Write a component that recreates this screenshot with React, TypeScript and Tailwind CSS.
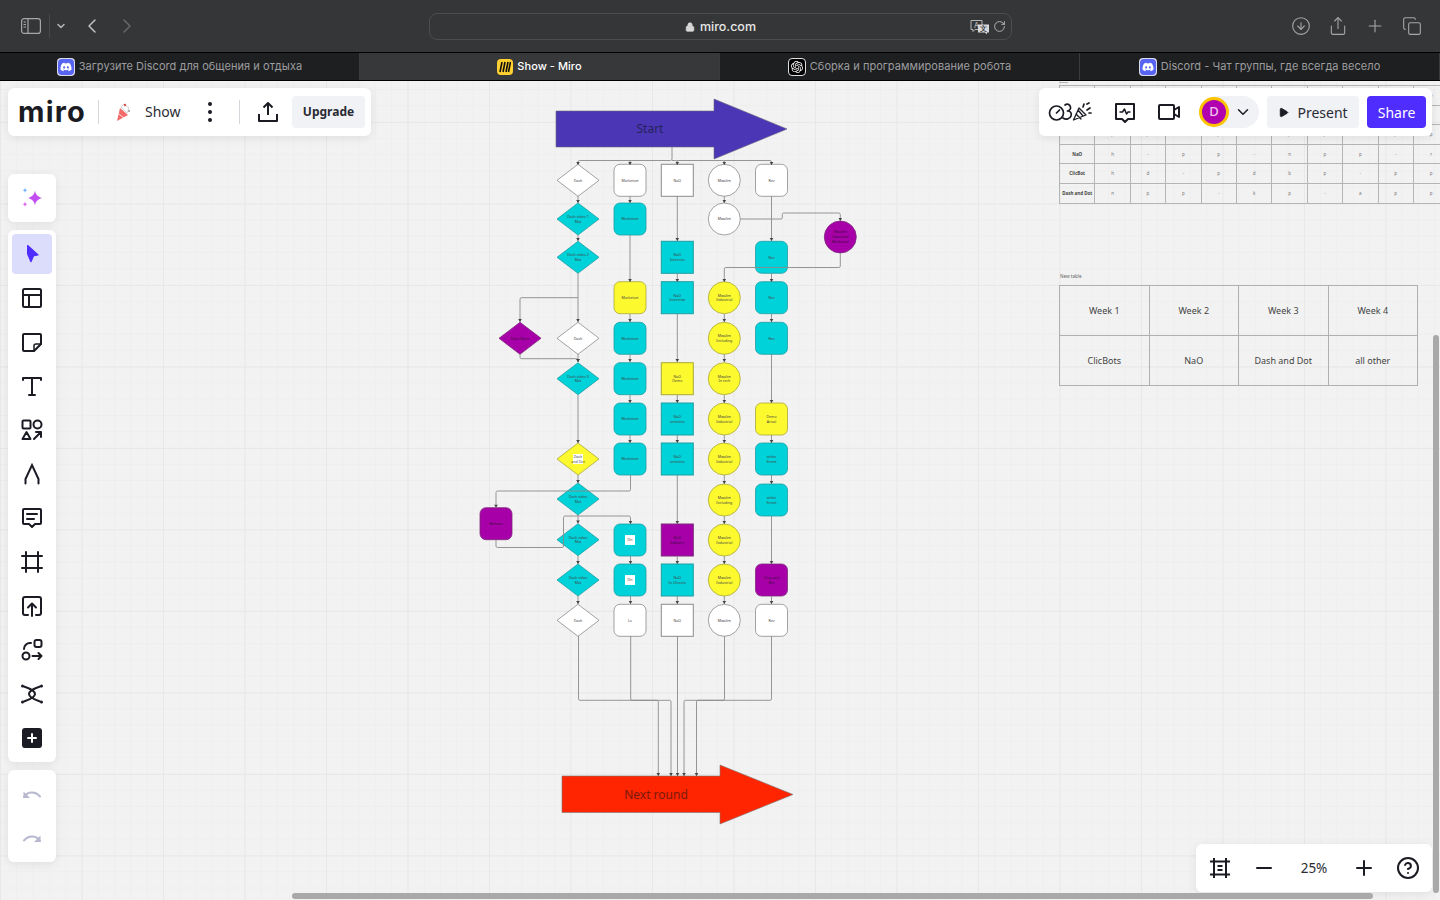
import React from 'react';
import { ChevronDown, ChevronLeft, ChevronRight, CircleArrowDown, CircleHelp, Copy, Lock, Minus, Play, Plus, RotateCw, Share } from 'lucide-react';
import { FaDiscord } from 'react-icons/fa';
import { SiOpenai } from 'react-icons/si';

const sans = 'font-["Noto_Sans",sans-serif]';

type Shape = 'diamond' | 'round' | 'square' | 'circle';
type Node = { s: Shape; x: number; y: number; fill: string; t: string[]; hl?: boolean };

const CY = '#00d2d9';
const YE = '#fdf92f';
const PU = '#a800a8';
const WH = '#ffffff';

const col = (s: Shape, x: number, rows: [number, string, string[], boolean?][]): Node[] =>
  rows.map(([y, fill, t, hl]) => ({ s, x, y, fill, t, hl }));

const nodes: Node[] = [
  ...col('diamond', 578, [
    [180.3, WH, ['Dash']],
    [219, CY, ['Dash video 1', 'Mat']],
    [257.3, CY, ['Dash video 2', 'Mat']],
    [338.3, WH, ['Dash']],
    [378.7, CY, ['Dash video 3', 'Mat']],
    [459, YE, ['Dash', 'and Dot'], true],
    [499, CY, ['Dash video', 'Mat']],
    [539.7, CY, ['Dash video', 'Mat']],
    [580, CY, ['Dash video', 'Mat']],
    [620.3, WH, ['Dash']],
  ]),
  ...col('diamond', 520, [[338.3, PU, ['Dash Nano']]]),
  ...col('round', 630, [
    [180.3, WH, ['Marketset']],
    [219, CY, ['Marketset']],
    [297.7, YE, ['Marketset']],
    [338.3, CY, ['Marketset']],
    [378.7, CY, ['Marketset']],
    [419, CY, ['Marketset']],
    [459, CY, ['Marketset']],
    [540, CY, ['Dn'], true],
    [580, CY, ['Dn'], true],
    [620.3, WH, ['Lo']],
  ]),
  ...col('round', 496, [[523.7, PU, ['Rennen']]]),
  ...col('square', 677.3, [
    [180.3, WH, ['NaO']],
    [257.3, CY, ['NaO', 'Intervies']],
    [297.7, CY, ['NaO', 'Interview']],
    [378.7, YE, ['NaO', 'Demo']],
    [419, CY, ['NaO', 'activities']],
    [459, CY, ['NaO', 'activities']],
    [540, PU, ['NaO', 'Industry']],
    [580, CY, ['NaO', 'In Ukraine']],
    [620.3, WH, ['NaO']],
  ]),
  ...col('circle', 724.3, [
    [180.3, WH, ['Mwalim']],
    [219, WH, ['Mwalim']],
    [297.7, YE, ['Mwalim', 'Industrial']],
    [338.3, YE, ['Mwalim', 'Including']],
    [378.7, YE, ['Mwalim', 'In tech']],
    [419, YE, ['Mwalim', 'Industrial']],
    [459, YE, ['Mwalim', 'Industrial']],
    [500, YE, ['Mwalim', 'Including']],
    [540, YE, ['Mwalim', 'Industrial']],
    [580, YE, ['Mwalim', 'Industrial']],
    [620.3, WH, ['Mwalim']],
  ]),
  ...col('circle', 840.3, [[237, PU, ['Mwalim', 'Industrial', 'Marketset']]]),
  ...col('round', 771.5, [
    [180.3, WH, ['Rev']],
    [257.3, CY, ['Rev']],
    [297.7, CY, ['Rev']],
    [338.3, CY, ['Rev']],
    [419, YE, ['Demo', 'Arival']],
    [459, CY, ['white', 'Street']],
    [500, CY, ['white', 'Street']],
    [580, PU, ['Gray and', 'Rev']],
    [620.3, WH, ['Rev']],
  ]),
];

// connectors, each one a list of points and the last one gets an arrow head
const links: [number, number][][] = [
  [[672, 147], [672, 160.5], [578, 160.5], [578, 165]],
  [[630, 160.5], [630, 165]],
  [[672, 160.5], [677.3, 160.5], [677.3, 165]],
  [[677, 160.5], [724.3, 160.5], [724.3, 165]],
  [[724, 160.5], [771.5, 160.5], [771.5, 165]],
  [[578, 196], [578, 203]],
  [[578, 235], [578, 241]],
  [[578, 273], [578, 322]],
  [[578, 297.7], [520, 297.7], [520, 322]],
  [[520, 354], [520, 358.7], [578, 358.7], [578, 362]],
  [[578, 354], [578, 362]],
  [[578, 395], [578, 443]],
  [[578, 475], [578, 483]],
  [[578, 515], [578, 523.5]],
  [[578, 556], [578, 564]],
  [[578, 596], [578, 604]],
  [[630, 196], [630, 203]],
  [[630, 235], [630, 282]],
  [[630, 314], [630, 322]],
  [[630, 354], [630, 362]],
  [[630, 395], [630, 403]],
  [[630, 435], [630, 443]],
  [[630.5, 475], [630.5, 491], [496, 491], [496, 507.7]],
  [[496, 540], [496, 547.5], [563.5, 547.5], [563.5, 516], [630.5, 516], [630.5, 524]],
  [[630.5, 556], [630.5, 564]],
  [[630.5, 596], [630.5, 604]],
  [[677.3, 196], [677.3, 241]],
  [[677.3, 273], [677.3, 282]],
  [[677.3, 314], [677.3, 362]],
  [[677.3, 395], [677.3, 403]],
  [[677.3, 435], [677.3, 443]],
  [[677.3, 475], [677.3, 524]],
  [[677.3, 556], [677.3, 564]],
  [[677.3, 596], [677.3, 604]],
  [[724.3, 196], [724.3, 203]],
  [[740.3, 219], [782.3, 219], [782.3, 213], [840.3, 213], [840.3, 221]],
  [[840.3, 253], [840.3, 267.5], [724.3, 267.5], [724.3, 282]],
  [[724.3, 314], [724.3, 322]],
  [[724.3, 354], [724.3, 362]],
  [[724.3, 395], [724.3, 403]],
  [[724.3, 435], [724.3, 443]],
  [[724.3, 475], [724.3, 484]],
  [[724.3, 516], [724.3, 524]],
  [[724.3, 556], [724.3, 564]],
  [[724.3, 596], [724.3, 604]],
  [[771.5, 196], [771.5, 241]],
  [[771.5, 273], [771.5, 282]],
  [[771.5, 314], [771.5, 322]],
  [[771.5, 354], [771.5, 403]],
  [[771.5, 435], [771.5, 443]],
  [[771.5, 475], [771.5, 484]],
  [[771.5, 516], [771.5, 564]],
  [[771.5, 596], [771.5, 604]],
  [[578.5, 636], [578.5, 700.3], [658.3, 700.3], [658.3, 776]],
  [[630.7, 636], [630.7, 700.3], [671, 700.3], [671, 776]],
  [[677.5, 636], [677.5, 776]],
  [[724.5, 636], [724.5, 700.3], [684, 700.3], [684, 776]],
  [[771.5, 636], [771.5, 700.3], [696.5, 700.3], [696.5, 776]],
];

function linkPath(pts: [number, number][]) {
  const r = 1.5;
  let d = `M${pts[0][0]} ${pts[0][1]}`;
  for (let i = 1; i < pts.length; i++) {
    const [x, y] = pts[i];
    if (i === pts.length - 1) {
      d += `L${x} ${y}`;
    } else {
      const [px, py] = pts[i - 1];
      const [nx, ny] = pts[i + 1];
      const a = [x - Math.sign(x - px) * r, y - Math.sign(y - py) * r];
      const b = [x + Math.sign(nx - x) * r, y + Math.sign(ny - y) * r];
      d += `L${a[0]} ${a[1]}Q${x} ${y} ${b[0]} ${b[1]}`;
    }
  }
  return d;
}

function FlowNode({ n }: { n: Node }) {
  const dark = n.fill === PU;
  const stroke = n.fill === WH ? '#8c8c8c' : n.fill === CY ? '#1f9ea3' : n.fill === YE ? '#a8a83a' : '#7c2a7c';
  const h = 16;
  const w = n.s === 'diamond' ? 21 : 16;
  let shape;
  if (n.s === 'diamond') shape = <polygon points={`${n.x - w},${n.y} ${n.x},${n.y - h} ${n.x + w},${n.y} ${n.x},${n.y + h}`} fill={n.fill} stroke={stroke} strokeWidth={0.8} />;
  else if (n.s === 'circle') shape = <circle cx={n.x} cy={n.y} r={16} fill={n.fill} stroke={stroke} strokeWidth={0.8} />;
  else shape = <rect x={n.x - 16} y={n.y - 16} width={32} height={32} rx={n.s === 'round' ? 6 : 0} fill={n.fill} stroke={stroke} strokeWidth={n.s === 'square' ? 1 : 0.8} />;
  const y0 = n.y + 1.2 - (n.t.length - 1) * 2.4;
  return (
    <g>
      {shape}
      {n.hl && <rect x={n.x - 5} y={n.y - 5} width={10} height={10} fill="#ffffff" />}
      {n.t.map((line, i) => (
        <text key={i} x={n.x} y={y0 + i * 4.8} textAnchor="middle" fontSize={3.6} fill={dark ? '#3a103a' : '#444'} fontFamily="Noto Sans, sans-serif">{line}</text>
      ))}
    </g>
  );
}

function Flowchart() {
  return (
    <svg className="absolute inset-0" width={1440} height={819} viewBox="0 81 1440 819">
      <polygon points="556,111 714,111 714,99 787,129 714,159 714,147 556,147" fill="#4b36b5" stroke="#6a6a7a" strokeWidth={0.6} />
      <text x={650} y={133} textAnchor="middle" fontSize={12} fill="#27225c" fontFamily="Noto Sans, sans-serif">Start</text>
      <polygon points="562,776 720,776 720,765 793,794.5 720,824 720,812.5 562,812.5" fill="#ff2500" stroke="#777" strokeWidth={0.6} />
      <text x={656} y={799} textAnchor="middle" fontSize={12} fill="#7a1a0c" fontFamily="Noto Sans, sans-serif">Next round</text>
      {nodes.map((n, i) => <FlowNode key={i} n={n} />)}
      {links.map((pts, i) => {
        const [ex, ey] = pts[pts.length - 1];
        return (
          <g key={i}>
            <path d={linkPath(pts)} fill="none" stroke="#8a8a8a" strokeWidth={0.9} />
            <polygon points={`${ex - 1.8},${ey - 3} ${ex + 1.8},${ey - 3} ${ex},${ey}`} fill="#444" />
          </g>
        );
      })}
      <line x1={1059} y1={82.5} x2={1068} y2={82.5} stroke="#b5b5b5" />
      <text x={1060} y={278} fontSize={4.6} fill="#666" fontFamily="Noto Sans, sans-serif">New table</text>
    </svg>
  );
}

const upperRows = [
  ['', 'a', 'p', '-', 'p', 'p', '-', 'p', 'p', '-', 'p'],
  ['', 'n', 'p', 'p', '-', 'p', 'p', 'p', 'p', 'p', 'r'],
  ['', 'p', 'p', 'n', 'p', '-', 'p', 'p', 'n', 'p', 'p'],
  ['NaO', 'h', '-', 'p', 'p', '-', 'n', 'p', 'p', '-', 'r'],
  ['ClicBot', 'h', 'd', '-', 'p', 'd', 'b', 'p', '-', 'p', 'p'],
  ['Dash and Dot', 'n', 'p', 'p', '-', 'k', 'p', '-', 'a', 'p', 'p'],
];

function UpperTable() {
  return (
    <div className={`absolute left-[1059px] top-[4px] grid grid-cols-[repeat(11,35.4px)] border-t border-l border-[#b5b5b5] ${sans}`}>
      {upperRows.flat().map((c, i) => (
        <div key={i} className={`h-[19.6px] flex items-center justify-center border-r border-b border-[#b5b5b5] text-[4.5px] whitespace-nowrap ${i % 11 === 0 ? 'font-bold text-[#444]' : 'text-[#777]'}`}>{c}</div>
      ))}
    </div>
  );
}

function LowerTable() {
  const cells = ['Week 1', 'Week 2', 'Week 3', 'Week 4', 'ClicBots', 'NaO', 'Dash and Dot', 'all other'];
  return (
    <div className={`absolute left-[1059px] top-[204px] w-[359px] grid grid-cols-4 border-t border-l border-[#b0b0b0] ${sans}`}>
      {cells.map(c => (
        <div key={c} className="h-[50px] flex items-center justify-center border-r border-b border-[#b0b0b0] text-[9px] text-[#444]">{c}</div>
      ))}
    </div>
  );
}

function ToolIcon({ children }: { children: React.ReactNode }) {
  return (
    <svg width={24} height={24} viewBox="0 0 24 24" fill="none" stroke="#1a1b23" strokeWidth={2} strokeLinecap="round" strokeLinejoin="round">{children}</svg>
  );
}

const tools: React.ReactNode[] = [
  <><rect x={3} y={3} width={18} height={18} rx={1.5} /><path d="M3 9h18M9 9v12" /></>,
  <><path d="M3 5a1 1 0 0 1 1-1h16a1 1 0 0 1 1 1v9l-7 7H4a1 1 0 0 1-1-1z" /><path d="M14 21v-5a2 2 0 0 1 2-2h5" strokeWidth={1.5} /></>,
  <path d="M3 6V4h18v2M12 4v17M9 21h6" />,
  <><rect x={2.5} y={2.5} width={8} height={8} rx={1} /><circle cx={17.5} cy={6.5} r={4} /><path d="M6.5 14l4 7h-8zM14 21l7-7M16 14h5v5" /></>,
  <path d="M5.500 21.500v-4.500L12 3l6.500 14v4.500" strokeLinejoin="miter" />,
  <path d="M3 4a1 1 0 0 1 1-1h16a1 1 0 0 1 1 1v13a1 1 0 0 1-1 1h-5l-3 3-3-3H4a1 1 0 0 1-1-1zM7 8h10M7 13h7" />,
  <path d="M6 2v20M18 2v20M2 6h20M2 18h20" />,
  <path d="M8 21H5a2 2 0 0 1-2-2V5a2 2 0 0 1 2-2h14a2 2 0 0 1 2 2v14a2 2 0 0 1-2 2h-3M12 22V10M8 13.5l4-4 4 4" />,
  <><rect x={14.5} y={2} width={7} height={7} rx={2} /><circle cx={6} cy={18} r={3.5} /><path d="M12.5 18h9M18.5 15l3 3-3 3M4 11a6 6 0 0 1 6-6h1" /></>,
  <><path d="M4 4.500Q26 12 4 19.500M20 4.500Q-2 12 20 19.500" /><path d="M2.500 4v0M21.500 4v0M2.500 20v0M21.500 20v0" strokeWidth={3} /></>,
  <><rect x={3} y={3} width={18} height={18} rx={2} fill="#1a1b23" /><path d="M12 8v8M8 12h8" stroke="#fff" /></>,
];

function ToolBtn({ children, active }: { children: React.ReactNode; active?: boolean }) {
  return <div className={`w-10 h-10 rounded flex items-center justify-center ${active ? 'bg-[#dcdcfb]' : ''}`}>{children}</div>;
}

const panel = 'bg-white rounded-md shadow-[0_2px_10px_rgba(0,0,0,0.08)]';

function LeftBar() {
  return (
    <div className="absolute left-2 top-[93px] w-12 flex flex-col gap-2">
      <div className={`${panel} h-12 flex items-center justify-center`}>
        <svg width={24} height={24} viewBox="0 0 24 24">
          <path d="M15 4.500c.7 4 2.500 6 7 7.500-4.500 1.500-6.300 3.500-7 7.500-.7-4-2.500-6-7-7.500 4.500-1.500 6.300-3.500 7-7.500z" fill="#c24df0" />
          <path d="M5 1.500c.3 1.800 1 2.500 2.700 2.800-1.700.3-2.400 1-2.700 2.700-.3-1.700-1-2.400-2.700-2.700 1.700-.3 2.400-1 2.700-2.800z" fill="#6fb2ff" />
          <path d="M5 15.500c.3 1.800 1 2.500 2.700 2.800-1.700.3-2.400 1-2.700 2.700-.3-1.700-1-2.400-2.700-2.700 1.700-.3 2.400-1 2.700-2.800z" fill="#e35cf0" />
        </svg>
      </div>
      <div className={`${panel} p-1 flex flex-col gap-1`}>
        <ToolBtn active>
          <svg width={24} height={24} viewBox="0 0 24 24"><path d="M7 3.500a.6.6 0 0 1 1-.4l10.500 9.400a.6.6 0 0 1-.3 1l-4.200.7-2.500 5.800a.6.6 0 0 1-1.100 0L7 12z" fill="#4f2dff" /></svg>
        </ToolBtn>
        {tools.map((t, i) => <ToolBtn key={i}><ToolIcon>{t}</ToolIcon></ToolBtn>)}
      </div>
      <div className={`${panel} p-1 flex flex-col gap-1`}>
        <ToolBtn>
          <svg width={24} height={24} viewBox="0 0 24 24" fill="none" stroke="#b7b8d0" strokeWidth={2}><path d="M4 15c3-5.500 11-6.500 16-.5" strokeLinecap="round" /><path d="M3.500 9.500v6.500H10z" fill="#b7b8d0" stroke="none" /></svg>
        </ToolBtn>
        <ToolBtn>
          <svg width={24} height={24} viewBox="0 0 24 24" fill="none" stroke="#b7b8d0" strokeWidth={2}><path d="M20 15c-3-5.500-11-6.500-16-.5" strokeLinecap="round" /><path d="M20.500 9.500v6.500H14z" fill="#b7b8d0" stroke="none" /></svg>
        </ToolBtn>
      </div>
    </div>
  );
}

function BoardPanel() {
  return (
    <div className={`absolute left-2 top-[7px] w-[363px] h-12 ${panel} flex items-center`}>
      <div className="w-[90px] pl-[10px] font-['Inter',sans-serif] font-bold text-[29px] leading-none tracking-[1.2px] text-[#1a1b23] -mt-[1px]">miro</div>
      <div className="w-px h-6 bg-[#d5d6dc]" />
      <svg className="ml-[16px]" width={16} height={20} viewBox="0 0 16 20">
        <path d="M2 19l3-13 8 7z" fill="#f26a6a" />
        <path d="M6 5l3-3 5 4-2 5z" fill="#fff" stroke="#c9c9cf" strokeWidth={0.8} />
        <circle cx={10} cy={3} r={1.2} fill="#d94f4f" />
        <circle cx={14} cy={9} r={1} fill="#999" />
        <path d="M4 12l5 4" stroke="#fff" strokeWidth={0.8} />
      </svg>
      <span className={`ml-[14px] w-[63px] text-[14px] leading-none -mt-[1px] text-[#2a2b33] ${sans}`}>Show</span>
      <div className="w-[4px] h-[20px] flex flex-col justify-between items-center">
        <span className="w-1 h-1 rounded-full bg-[#1a1b23]" />
        <span className="w-1 h-1 rounded-full bg-[#1a1b23]" />
        <span className="w-1 h-1 rounded-full bg-[#1a1b23]" />
      </div>
      <div className="ml-[27px] w-px h-6 bg-[#d5d6dc]" />
      <svg className="ml-[16px]" width={24} height={24} viewBox="0 0 24 24" fill="none" stroke="#1a1b23" strokeWidth={2} strokeLinejoin="round"><path d="M12 15V3M7.500 7.500L12 3l4.500 4.500M3 14v7h18v-7" /></svg>
      <div className={`ml-[12px] w-[73px] h-8 rounded bg-[#f1f2f6] flex items-center justify-center text-[12px] font-bold text-[#2a2b33] ${sans}`}>Upgrade</div>
    </div>
  );
}

function SharePanel() {
  return (
    <div className={`absolute left-[1039px] top-[7px] w-[393px] h-12 ${panel} flex items-center ${sans}`}>
      <svg className="ml-[9px]" width={44} height={22} viewBox="0 0 44 22" fill="none" stroke="#1a1b23" strokeWidth={1.700} strokeLinejoin="round" strokeLinecap="round">
        <circle cx={8.500} cy={12} r={7} />
        <path d="M8.500 12l3-3" />
        <path d="M17 4c2-1.500 5-1 5.500 2 .5 2-1 3.500-3 4 3 0 4.500 2 3.500 5-1 3-5 4-8 2" />
        <path d="M25.500 19L31 7l7 7zM28 13l5 5M30 9l5 6" strokeWidth={1.300} />
        <path d="M35 6l1-3M39 9l3-2M39 3l2-1M41 12h2" />
      </svg>
      <svg className="ml-[21px]" width={24} height={24} viewBox="0 0 24 24" fill="none" stroke="#1a1b23" strokeWidth={2} strokeLinejoin="round"><path d="M3 4h18v15h-6l-3 3-3-3H3z" /><path d="M6.500 12h3l2-3 2 5 1.500-2h2.500" strokeWidth={1.500} /></svg>
      <svg className="ml-[20px]" width={24} height={24} viewBox="0 0 24 24" fill="none" stroke="#1a1b23" strokeWidth={2} strokeLinejoin="round"><rect x={2} y={5} width={15} height={14} rx={1} /><path d="M17 10l5-3v10l-5-3" /></svg>
      <div className="ml-[19px] w-[59px] h-8 rounded-full bg-[#f1f2f6] flex items-center">
        <div className="w-[30px] h-[30px] ml-[-1px] rounded-full border-[3px] border-[#fcc400] bg-[#b000b0] flex items-center justify-center text-[13px] font-medium text-[#f3c0f3]">D</div>
        <ChevronDown className="ml-[5px]" size={18} color="#1a1b23" strokeWidth={2} />
      </div>
      <div className="ml-2 w-[92px] h-8 rounded bg-[#f1f2f6] flex items-center justify-center gap-[8px] text-[14px] text-[#2a2b33]">
        <Play size={11} fill="#1a1b23" color="#1a1b23" />Present
      </div>
      <div className="ml-2 w-[59px] h-8 rounded bg-[#4f2dff] flex items-center justify-center text-[14px] text-white">Share</div>
    </div>
  );
}

function ZoomPanel() {
  return (
    <div className={`absolute left-[1196px] top-[763px] w-[236px] h-12 ${panel} flex items-center ${sans}`}>
      <svg className="ml-[12px]" width={24} height={24} viewBox="0 0 24 24" fill="none" stroke="#1a1b23" strokeWidth={2}><path d="M6 2v20M18 2v20M2 5.500h20M2 18.500h20M9.500 10h5M9.500 14h5" /></svg>
      <Minus className="ml-[20px]" size={24} color="#1a1b23" strokeWidth={2} />
      <span className="w-[76px] text-center text-[13.5px] text-[#2a2b33]">25%</span>
      <Plus size={24} color="#1a1b23" strokeWidth={2} />
      <CircleHelp className="ml-[20px]" size={24} color="#1a1b23" strokeWidth={2} />
    </div>
  );
}

function DiscordFav() {
  return (
    <div className="w-[18px] h-[18px] rounded-[4px] bg-[#dcdcec] flex items-center justify-center">
      <div className="w-[16px] h-[16px] rounded-[4px] bg-[#5865f2] flex items-center justify-center">
        <FaDiscord size={12} color="#fff" />
      </div>
    </div>
  );
}

const tabs = [
  { icon: <DiscordFav />, label: 'Загрузите Discord для общения и отдыха' },
  {
    icon: (
      <div className="w-4 h-4 rounded-[4px] bg-[#ffd02f] flex items-center justify-center">
        <svg width={12} height={12} viewBox="0 0 12 12" stroke="#111" strokeWidth={1.600}><path d="M3 1L1 11M6 1L4 11M9 1L7 11M11.500 1L9.500 11" /></svg>
      </div>
    ),
    label: 'Show - Miro',
    active: true,
  },
  {
    icon: (
      <div className="w-[18px] h-[18px] rounded-[4px] bg-black border border-[#ddd] flex items-center justify-center">
        <SiOpenai size={12} color="#fff" />
      </div>
    ),
    label: 'Сборка и программирование робота',
  },
  { icon: <DiscordFav />, label: 'Discord - Чат группы, где всегда весело' },
];

function BrowserChrome() {
  return (
    <div className="shrink-0 font-['Inter',sans-serif]">
      <div className="h-[52px] bg-[#353638] grid grid-cols-[429px_583px_428px] items-center">
        <div className="flex items-center">
          <svg className="ml-[21px]" width={20} height={16} viewBox="0 0 20 16" fill="none" stroke="#a6a7a9" strokeWidth={1.200}>
            <rect x={0.6} y={0.6} width={18.8} height={14.8} rx={2.500} />
            <path d="M7 0.600v14.800M2.500 4h2.500M2.500 6.500h2.500M2.500 9h2.500" />
          </svg>
          <div className="ml-[8px] w-px h-[24px] bg-[#48494b]" />
          <ChevronDown className="ml-[5px]" size={12} color="#b5b6b8" strokeWidth={3} />
          <ChevronLeft className="ml-[13px]" size={24} color="#c0c1c3" strokeWidth={1.500} />
          <ChevronRight className="ml-[11px]" size={24} color="#67686a" strokeWidth={1.500} />
        </div>
        <div className="relative h-[27px] rounded-lg border border-[#4c4d4f] flex items-center justify-center gap-[5px] pt-[2px] text-[12.5px] font-medium text-[#e6e6e6]">
          <Lock size={10} fill="#d8d8d8" color="#d8d8d8" strokeWidth={2} />
          miro.com
          <div className="absolute right-[5px] top-[5px] flex items-center gap-[3px]">
            <svg width={20} height={16} viewBox="0 0 20 16" fontFamily="Inter, sans-serif">
              <path d="M1 1.500h11v9H5l-2 2v-2H1z" fill="none" stroke="#b5b6b8" strokeWidth={1} />
              <text x={6.500} y={8.500} textAnchor="middle" fontSize={7} fill="#b5b6b8">A</text>
              <path d="M8 5.500h11v8h-2v2l-2-2H8z" fill="#d8d9db" />
              <text x={13.500} y={12} textAnchor="middle" fontSize={6.500} fontWeight={700} fill="#353638">文</text>
            </svg>
            <RotateCw size={13} color="#c6c7c9" strokeWidth={1.500} />
          </div>
        </div>
        <div className="flex items-center justify-end pr-[18px] gap-[17px]">
          <CircleArrowDown size={20} color="#a6a7a9" strokeWidth={1.300} />
          <Share size={20} color="#a6a7a9" strokeWidth={1.300} />
          <Plus size={20} color="#a6a7a9" strokeWidth={1.300} />
          <Copy size={20} color="#a6a7a9" strokeWidth={1.300} />
        </div>
      </div>
      <div className="h-[29px] bg-[#1e1f21] border-y border-black grid grid-cols-4">
        {tabs.map(t => (
          <div key={t.label} className={`flex items-center justify-center gap-[4px] text-[11px] tracking-[0.05px] border-r border-[#3a3b3d] ${t.active ? 'bg-[#37383a] text-white font-medium' : 'text-[#9c9d9f]'}`}>
            {t.icon}
            <span className="whitespace-nowrap">{t.label}</span>
          </div>
        ))}
      </div>
    </div>
  );
}

export default function App() {
  return (
    <div className="h-screen w-screen flex flex-col overflow-hidden">
      <BrowserChrome />
      <div className="relative flex-1 overflow-hidden bg-[#f2f2f2] bg-[linear-gradient(#e8e8e8_1px,transparent_1px),linear-gradient(90deg,#e8e8e8_1px,transparent_1px),linear-gradient(#eeeeee_1px,transparent_1px),linear-gradient(90deg,#eeeeee_1px,transparent_1px)] bg-[size:81.5px_81.5px,81.5px_81.5px,16.3px_16.3px,16.3px_16.3px] bg-[position:0_41px,0_0,0_8px,0_0]">
        <UpperTable />
        <LowerTable />
        <Flowchart />
        <BoardPanel />
        <SharePanel />
        <LeftBar />
        <ZoomPanel />
        {/* scrollbars */}
        <div className="absolute left-[292px] top-[812px] w-[1081px] h-[6px] rounded-full bg-[#a9a9a9]" />
        <div className="absolute left-[1433px] top-[254px] w-[6px] h-[558px] rounded-full bg-[#a9a9a9]" />
      </div>
    </div>
  );
}
